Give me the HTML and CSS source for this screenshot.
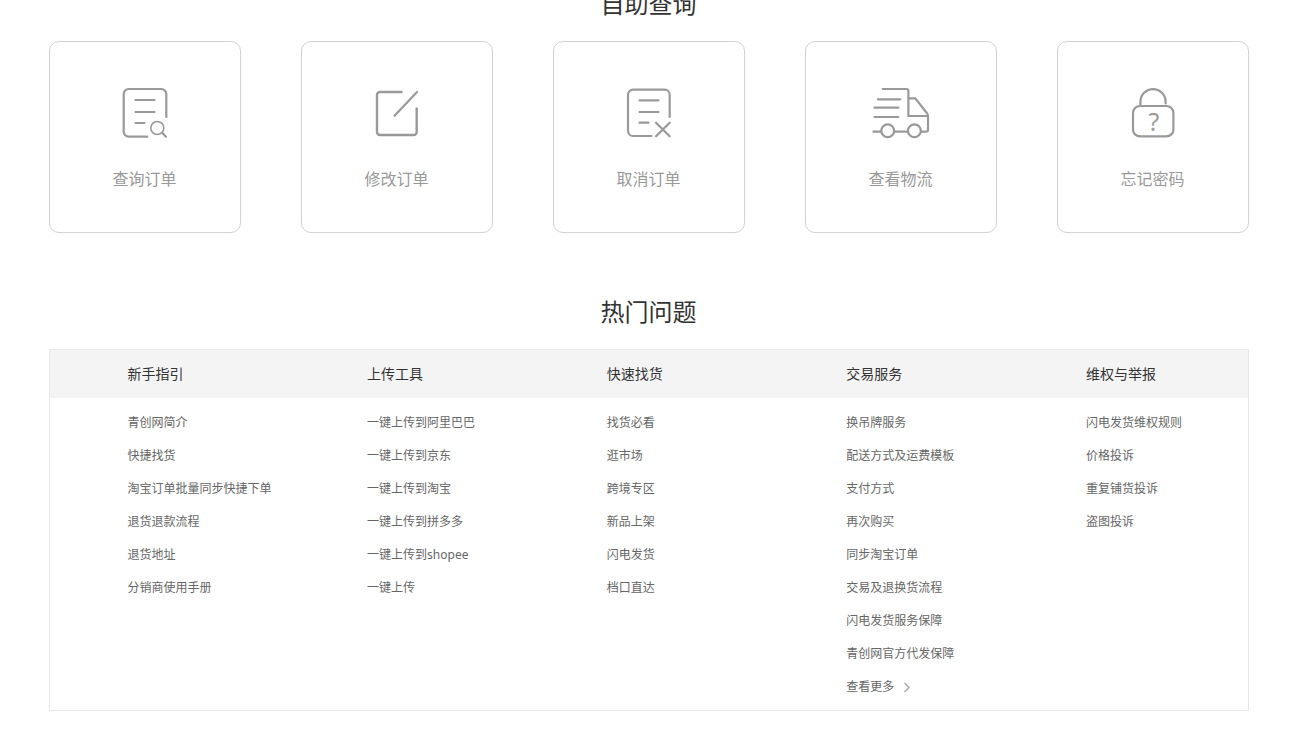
FILE: index.html
```html
<!DOCTYPE html>
<html lang="zh-CN">
<head>
<meta charset="utf-8">
<meta name="viewport" content="width=device-width, initial-scale=1">
<title>帮助中心</title>
<link rel="stylesheet" href="styles.css">
</head>
<body>
<main class="container">
  <section class="self-service">
    <h2 class="section-title">自助查询</h2>
    <nav class="cards">
      <a class="card" href="#">
        <svg class="card-icon" viewBox="0 0 60 60" aria-hidden="true">
          <path d="M51.3 34V11a5 5 0 0 0-5-5H13.7a5 5 0 0 0-5 5v37.7a5 5 0 0 0 5 5h18.6M20.5 17h19M20.5 29h19M20.5 40h9"/>
          <circle class="thin" cx="42.3" cy="45" r="6.5"/>
          <path d="M47.4 50l3.6 3.7"/>
        </svg>
        <span>查询订单</span>
      </a>
      <a class="card" href="#">
        <svg class="card-icon" viewBox="0 0 60 60" aria-hidden="true">
          <path class="butt" d="M35.5 9H13a3 3 0 0 0-3 3v37a3 3 0 0 0 3 3h33.7a3 3 0 0 0 3-3V24.5"/>
          <path d="M27.5 32.8L50 9"/>
        </svg>
        <span>修改订单</span>
      </a>
      <a class="card" href="#">
        <svg class="card-icon" viewBox="0 0 60 60" aria-hidden="true">
          <path d="M50.7 34V11.7a5 5 0 0 0-5-5H14a5 5 0 0 0-5 5V48a5 5 0 0 0 5 5h18.3M20.5 17.3h19M20.5 29h19M20.5 39.7h9M37 39.7l13.7 13.6M50.7 39.7L37 53.3"/>
        </svg>
        <span>取消订单</span>
      </a>
      <a class="card" href="#">
        <svg class="card-icon" viewBox="0 0 60 60" aria-hidden="true">
          <path d="M11.7 6h24.1a1.6 1.6 0 0 1 1.6 1.6V33H57M7 16.3h22.3M3.5 24.7h23.8M3.5 34h23.8M37.4 15.3h6.9L56 30.3q1 1.2 1 3v13.9a1.5 1.5 0 0 1-1.5 1.5h-5.2M2.5 48.7H10M23.3 48.7H37"/>
          <circle cx="16.7" cy="47.7" r="6.4"/>
          <circle cx="43.4" cy="47.7" r="6.4"/>
        </svg>
        <span>查看物流</span>
      </a>
      <a class="card" href="#">
        <svg class="card-icon" viewBox="0 0 60 60" aria-hidden="true">
          <rect x="10" y="23" width="40.4" height="30.4" rx="7"/>
          <path d="M17.4 23v-4.3a12.6 12.6 0 0 1 25.2 0v1.8"/>
          <text x="31" y="48" text-anchor="middle">?</text>
        </svg>
        <span>忘记密码</span>
      </a>
    </nav>
  </section>

  <section class="hot">
    <h2 class="section-title">热门问题</h2>
    <div class="topics">
      <section class="topic">
        <h3 class="topic-title">新手指引</h3>
        <ul class="topic-list">
          <li><a href="#">青创网简介</a></li>
          <li><a href="#">快捷找货</a></li>
          <li><a href="#">淘宝订单批量同步快捷下单</a></li>
          <li><a href="#">退货退款流程</a></li>
          <li><a href="#">退货地址</a></li>
          <li><a href="#">分销商使用手册</a></li>
        </ul>
      </section>
      <section class="topic">
        <h3 class="topic-title">上传工具</h3>
        <ul class="topic-list">
          <li><a href="#">一键上传到阿里巴巴</a></li>
          <li><a href="#">一键上传到京东</a></li>
          <li><a href="#">一键上传到淘宝</a></li>
          <li><a href="#">一键上传到拼多多</a></li>
          <li><a href="#">一键上传到shopee</a></li>
          <li><a href="#">一键上传</a></li>
        </ul>
      </section>
      <section class="topic">
        <h3 class="topic-title">快速找货</h3>
        <ul class="topic-list">
          <li><a href="#">找货必看</a></li>
          <li><a href="#">逛市场</a></li>
          <li><a href="#">跨境专区</a></li>
          <li><a href="#">新品上架</a></li>
          <li><a href="#">闪电发货</a></li>
          <li><a href="#">档口直达</a></li>
        </ul>
      </section>
      <section class="topic">
        <h3 class="topic-title">交易服务</h3>
        <ul class="topic-list">
          <li><a href="#">换吊牌服务</a></li>
          <li><a href="#">配送方式及运费模板</a></li>
          <li><a href="#">支付方式</a></li>
          <li><a href="#">再次购买</a></li>
          <li><a href="#">同步淘宝订单</a></li>
          <li><a href="#">交易及退换货流程</a></li>
          <li><a href="#">闪电发货服务保障</a></li>
          <li><a href="#">青创网官方代发保障</a></li>
          <li><a class="more" href="#">查看更多<svg class="more-icon" viewBox="0 0 8 10" aria-hidden="true"><path d="M1.5 1L6 5.5 1.5 10"/></svg></a></li>
        </ul>
      </section>
      <section class="topic">
        <h3 class="topic-title">维权与举报</h3>
        <ul class="topic-list">
          <li><a href="#">闪电发货维权规则</a></li>
          <li><a href="#">价格投诉</a></li>
          <li><a href="#">重复铺货投诉</a></li>
          <li><a href="#">盗图投诉</a></li>
        </ul>
      </section>
    </div>
  </section>
</main>
</body>
</html>
```
FILE: styles.css
```css
* {
  box-sizing: border-box;
}

body {
  margin: 0;
  background: #fff;
  color: #333;
  font-family: "Noto Sans", "Noto Sans CJK SC", sans-serif;
  font-size: 12px;
}

a {
  color: inherit;
  text-decoration: none;
}

.container {
  max-width: 1200px;
  margin: 0 auto;
}

.self-service {
  margin-top: -14px;
}

.section-title {
  margin: 0 0 19px;
  font-size: 24px;
  font-weight: 400;
  line-height: 36px;
  text-align: center;
}

.cards {
  display: grid;
  grid-template-columns: repeat(5, 1fr);
  gap: 60px;
}

.card {
  display: flex;
  flex-direction: column;
  align-items: center;
  justify-content: center;
  gap: 24px;
  aspect-ratio: 1;
  border: 1px solid #d2d2d2;
  border-radius: 10px;
  color: #999;
  font-size: 16px;
  line-height: 24px;
}

.card-icon {
  width: 60px;
  height: 60px;
  fill: none;
  stroke: #999;
  stroke-width: 2.2;
  stroke-linecap: round;
}

.card-icon .thin {
  stroke-width: 1.6;
}

.card-icon .butt {
  stroke-width: 2.4;
  stroke-linecap: butt;
}

.card-icon text {
  fill: #999;
  stroke: none;
  font-size: 25px;
}

.hot {
  margin-top: 61px;
}

.topics {
  display: grid;
  grid-template-columns: repeat(5, 1fr);
  border: 1px solid #e8e8e8;
}

.topic-title {
  margin: 0;
  padding-left: 78px;
  background: #f4f4f4;
  font-size: 14px;
  font-weight: 400;
  line-height: 48px;
}

.topic-list {
  margin: 0;
  padding: 8px 0 7px 78px;
  color: #666;
  line-height: 33px;
  list-style: none;
  white-space: nowrap;
}

.more {
  display: inline-flex;
  align-items: center;
  gap: 9px;
}

.more-icon {
  width: 8px;
  height: 10px;
  overflow: visible;
  fill: none;
  stroke: #aaa;
  stroke-width: 1.5;
}
```
